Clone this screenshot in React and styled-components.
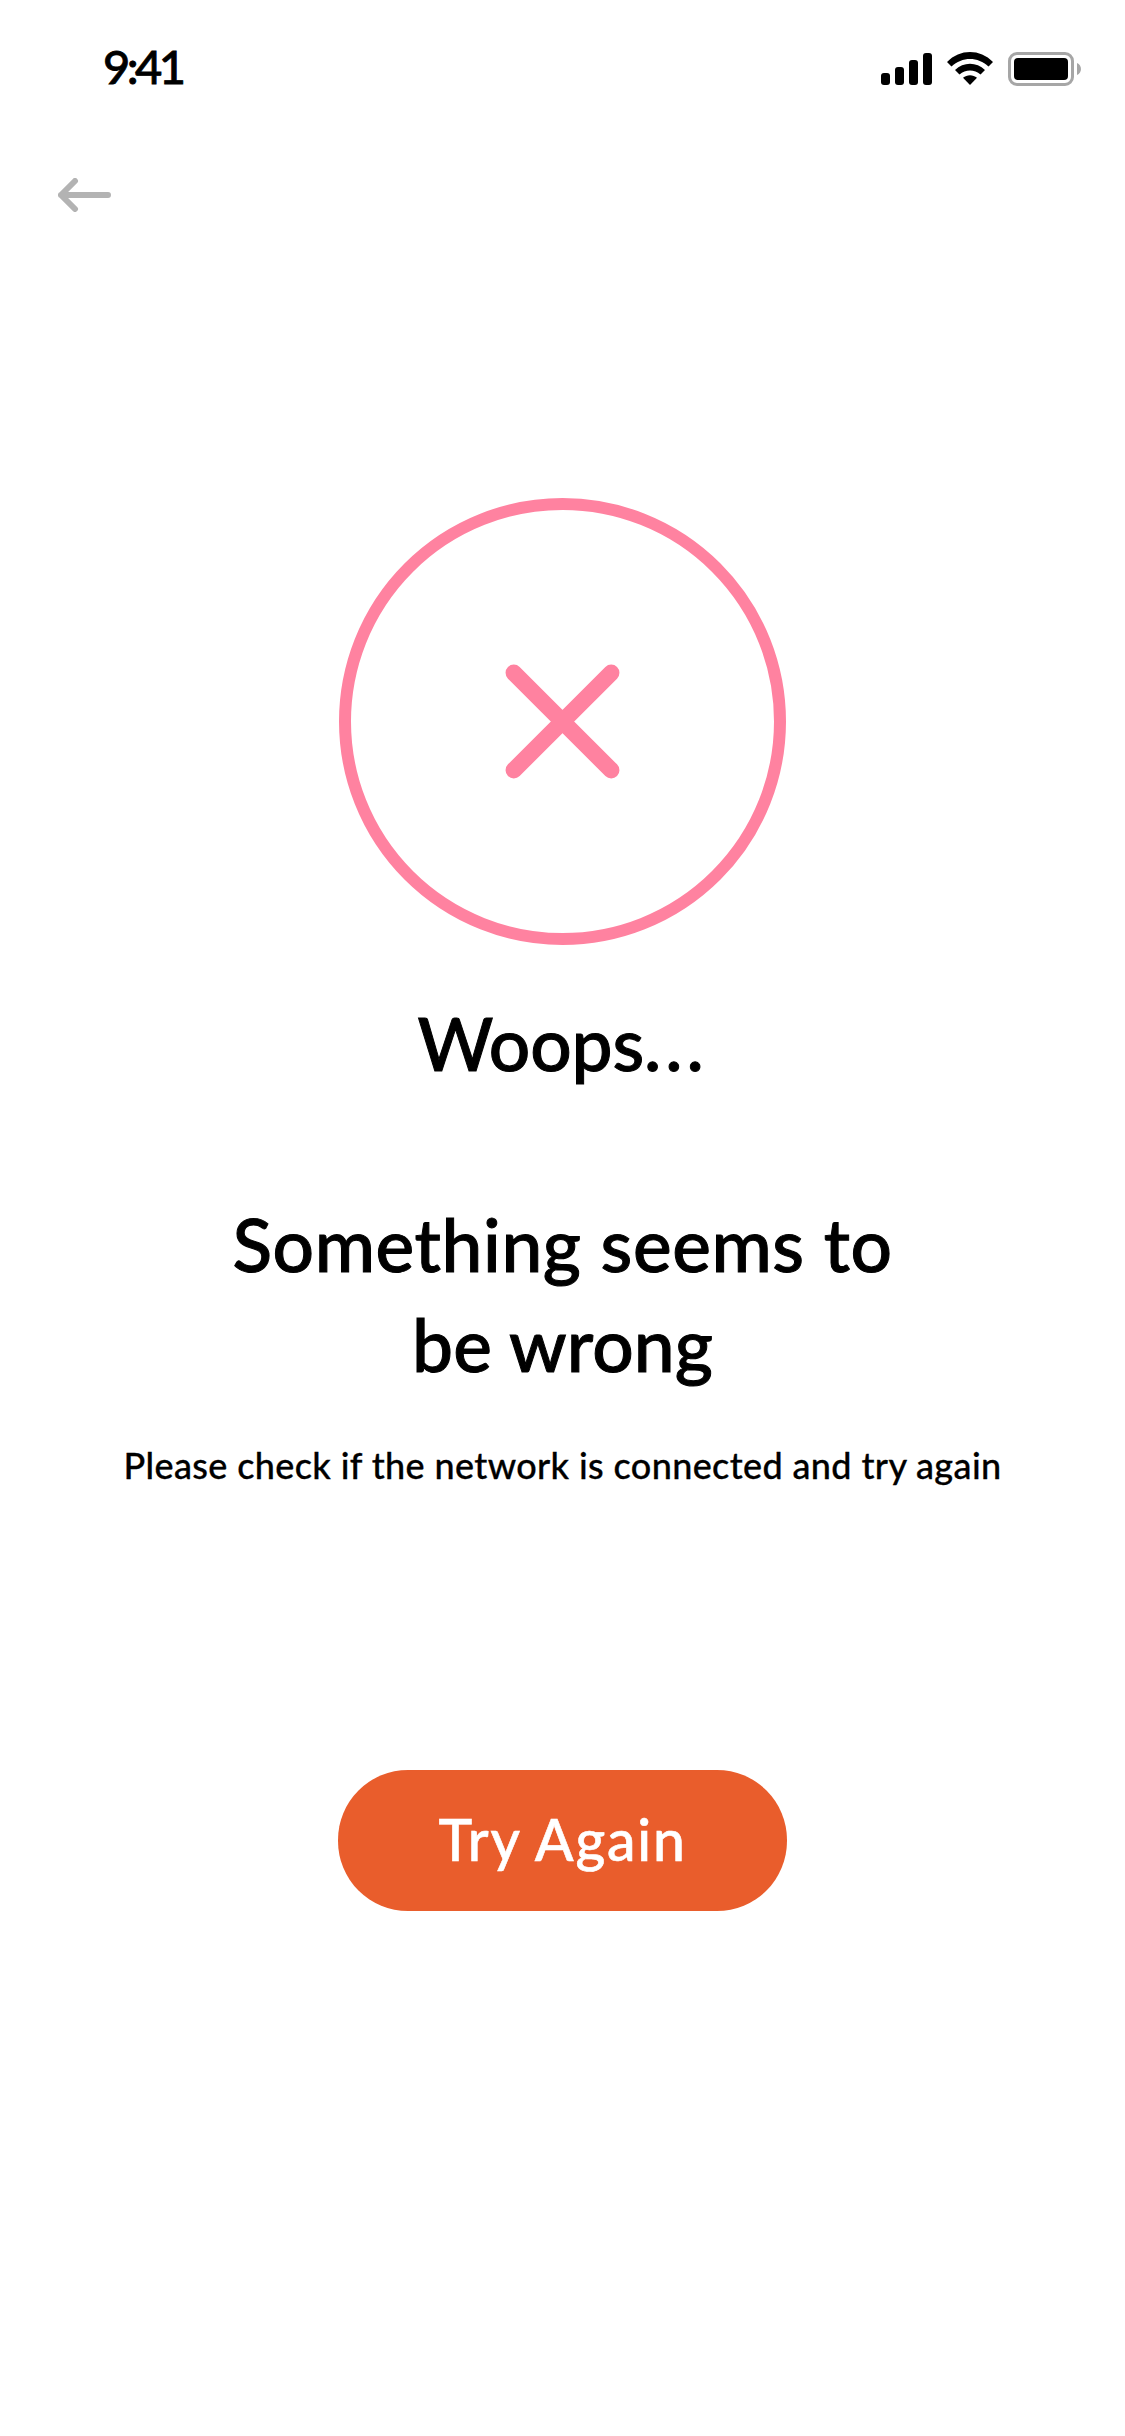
import React from "react";
import styled, { createGlobalStyle } from "styled-components";

const GlobalStyle = createGlobalStyle`
  *, *::before, *::after { box-sizing: border-box; }
  body { margin: 0; background: #fff; }
`;

const Screen = styled.div`
  width: 1125px;
  height: 2436px;
  display: flex;
  flex-direction: column;
  overflow: hidden;
  background: #fff;
  color: #000;
  font-family: Lato, "Liberation Sans", sans-serif;
  font-weight: 500;
`;

const StatusBar = styled.header`
  display: flex;
  justify-content: space-between;
  align-items: flex-start;
  height: 138px;
  padding: 36px 44px 0 103px;
`;

const Time = styled.time`
  font-size: 47px;
  line-height: 60px;
  letter-spacing: -3.5px;
  -webkit-text-stroke: 0.8px currentColor;
`;

const Indicators = styled.div`
  display: flex;
  gap: 15px;
  padding-top: 16px;
`;

const Icon = styled.svg`
  display: block;
  flex: none;
`;

const NavBar = styled.nav`
  display: flex;
  height: 360px;
  padding: 40px 0 0 58px;
`;

const BackButton = styled.button`
  width: 53px;
  height: 34px;
  padding: 0;
  border: 0;
  background: none;
  color: #b3b3b3;
`;

const Message = styled.main`
  display: flex;
  flex-direction: column;
  align-items: center;
  text-align: center;
`;

const ErrorBadge = styled.div`
  display: grid;
  place-items: center;
  width: 447px;
  height: 447px;
  border: 12px solid #ff82a0;
  border-radius: 50%;
  color: #ff82a0;
`;

const Heading = styled.h1`
  margin: ${(p) => p.$top}px 0 0;
  font-size: 73px;
  font-weight: 500;
  line-height: 100px;
  white-space: nowrap;
  -webkit-text-stroke: 1px currentColor;
`;

const Tracked = styled.span`
  letter-spacing: ${(p) => p.$tracking}px;
`;

const Line = styled(Tracked)`
  display: block;
`;

const Hint = styled.p`
  margin: 46px 0 0;
  font-size: 36px;
  line-height: 50px;
  letter-spacing: 0.37px;
  white-space: nowrap;
  -webkit-text-stroke: 0.3px currentColor;
`;

const RetryButton = styled.button`
  width: 449px;
  height: 141px;
  margin-top: 280px;
  padding: 0 0 3px;
  border: 0;
  border-radius: 70px;
  background: #e95d2c;
  color: #fff;
  font: inherit;
  font-size: 57px;
  letter-spacing: 1.8px;
  -webkit-text-stroke: 0.6px currentColor;
`;

const SignalIcon = () => (
  <Icon width="51" height="34" viewBox="0 0 51 34" fill="currentColor">
    <rect x="0" y="21" width="9" height="12" rx="3" />
    <rect x="14" y="15" width="9" height="18" rx="3" />
    <rect x="28" y="8" width="9" height="25" rx="3" />
    <rect x="42" y="1" width="9" height="32" rx="3" />
  </Icon>
);

const WifiIcon = () => (
  <Icon width="46" height="34" viewBox="0 0 46 34" fill="currentColor">
    <path d="M0 10C13-3.3 33-3.3 46 10L41.5 14.5C31 4.5 15 4.5 4.5 14.5Z" />
    <path d="M8 18C16.5 9.8 29.5 9.8 38 18L33.5 22.5C27.5 17 18.5 17 12.5 22.5Z" />
    <path d="M16 25.7C20 22.3 26 22.3 30 25.7L23 33Z" />
  </Icon>
);

const BatteryIcon = () => (
  <Icon width="73" height="34" viewBox="0 0 73 34">
    <rect x="1.5" y="1.5" width="63" height="31" rx="7.5" fill="none" stroke="#a6a6a6" strokeWidth="3" />
    <rect x="6" y="6" width="54" height="22" rx="4" fill="currentColor" />
    <path d="M69 11C74.3 13.3 74.3 20.7 69 23Z" fill="#a6a6a6" />
  </Icon>
);

const BackIcon = () => (
  <Icon width="53" height="34" viewBox="0 0 53 34" fill="none" stroke="currentColor" strokeWidth="6" strokeLinecap="round" strokeLinejoin="round">
    <path d="M17 3L3 17L17 31M3 17H50" />
  </Icon>
);

const CrossIcon = () => (
  <Icon width="115" height="115" viewBox="0 0 115 115" fill="none" stroke="currentColor" strokeWidth="16.5" strokeLinecap="round">
    <path d="M8.8 8.8L106.2 106.2M106.2 8.8L8.8 106.2" />
  </Icon>
);

export default function App() {
  return (
    <>
      <GlobalStyle />
      <Screen>
        <StatusBar>
          <Time>9:41</Time>
          <Indicators>
            <SignalIcon />
            <WifiIcon />
            <BatteryIcon />
          </Indicators>
        </StatusBar>
        <NavBar>
          <BackButton aria-label="Back">
            <BackIcon />
          </BackButton>
        </NavBar>
        <Message>
          <ErrorBadge>
            <CrossIcon />
          </ErrorBadge>
          <Heading $top={48}>
            <Tracked $tracking={-0.2}>Woops</Tracked>
            <Tracked $tracking={4}>...</Tracked>
          </Heading>
          <Heading as="h2" $top={101}>
            <Line $tracking={0.6}>Something seems to</Line>
            <Line $tracking={0.1}>be wrong</Line>
          </Heading>
          <Hint>Please check if the network is connected and try again</Hint>
          <RetryButton>Try Again</RetryButton>
        </Message>
      </Screen>
    </>
  );
}
